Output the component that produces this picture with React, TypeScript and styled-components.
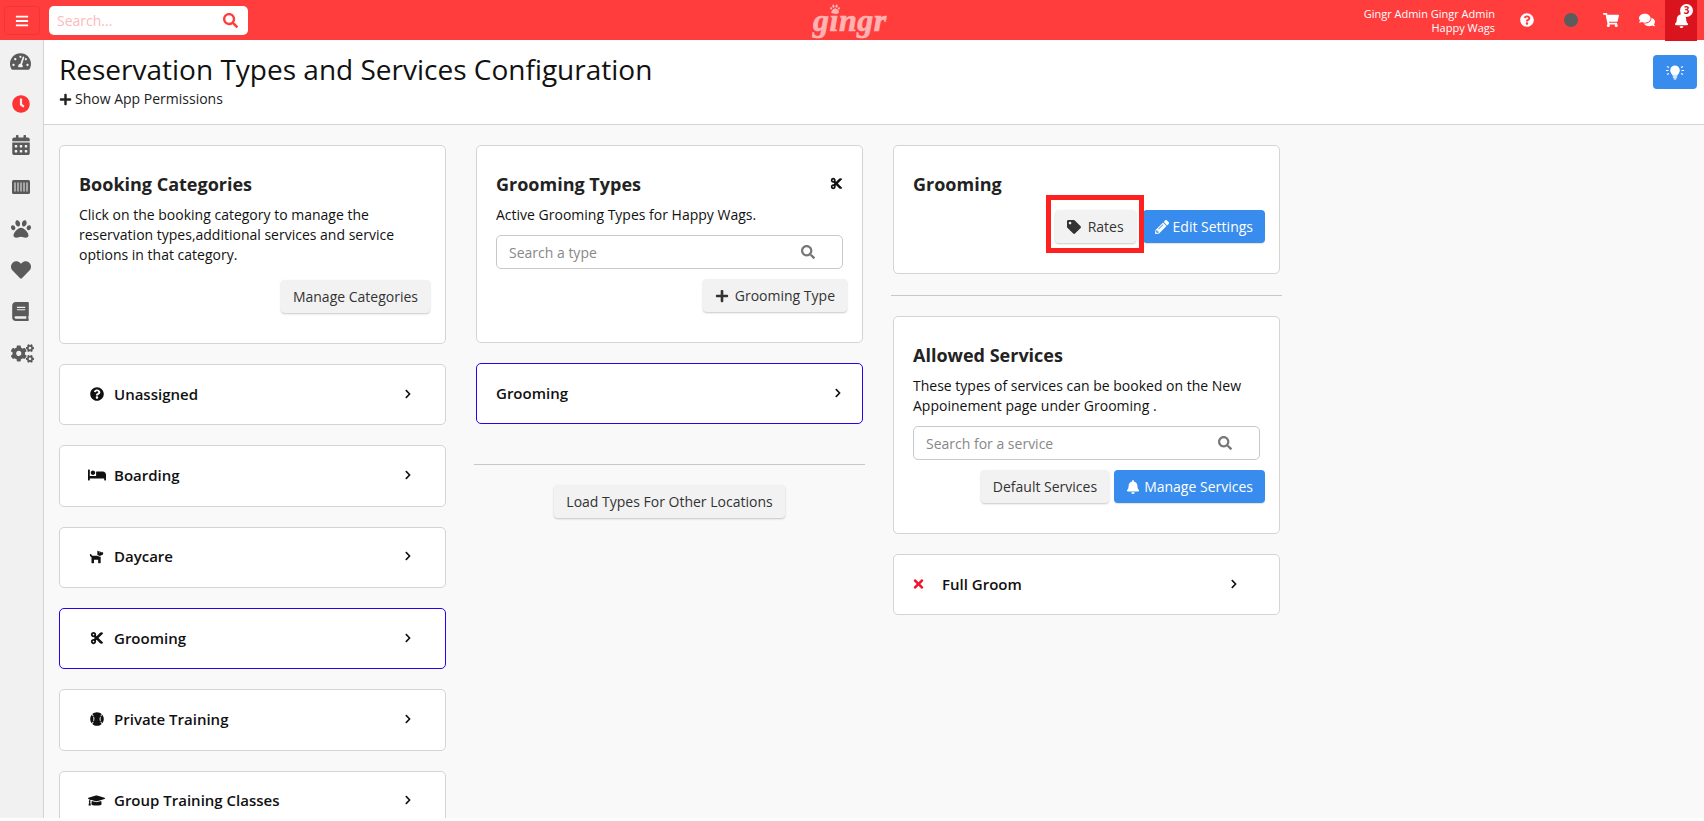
import React from "react";
import styled, { createGlobalStyle } from "styled-components";
import {
  FaBars,
  FaBaseballBall,
  FaBed,
  FaBell,
  FaBook,
  FaCalendarAlt,
  FaChevronRight,
  FaClock,
  FaCogs,
  FaComments,
  FaCut,
  FaDog,
  FaGraduationCap,
  FaHeart,
  FaPaw,
  FaPencilAlt,
  FaPlus,
  FaQuestionCircle,
  FaSearch,
  FaShoppingCart,
  FaTachometerAlt,
  FaTag,
  FaTimes,
} from "react-icons/fa";

const GlobalStyle = createGlobalStyle`
  html, body {
    margin: 0;
    height: 100%;
    overflow: hidden;
    background: #fff;
    font-family: "Open Sans", "Liberation Sans", sans-serif;
    color: #222;
  }
  * { box-sizing: border-box; }
`;

const Shell = styled.div`
  height: 818px;
  display: flex;
  flex-direction: column;
  overflow: hidden;
`;

const TopBar = styled.header`
  height: 40px;
  flex: none;
  background: #ff3d3d;
  display: flex;
  align-items: center;
  position: relative;
`;

const MenuButton = styled.div`
  width: 36px;
  height: 29px;
  margin: 1px 0 0 4px;
  border-radius: 4px;
  border: 1px solid #f23535;
  display: flex;
  align-items: center;
  justify-content: center;
  color: #fff;
  font-size: 14px;
`;

const TopSearch = styled.div`
  width: 199px;
  height: 29px;
  margin-left: 9px;
  background: #fff;
  border-radius: 5px;
  display: flex;
  align-items: center;
  justify-content: space-between;
  padding: 0 10px 0 8px;
  font-size: 14px;
  color: #ffb9b9;
  svg {
    color: #ff3d3d;
    font-size: 15px;
  }
`;

const Logo = styled.div`
  position: absolute;
  left: 813px;
  top: 4px;
  font-family: "Liberation Serif", serif;
  font-style: italic;
  font-weight: 700;
  font-size: 32px;
  line-height: 32px;
  letter-spacing: 0.5px;
  -webkit-text-stroke: 0.7px #ffb3b3;
  color: #ffb3b3;
  svg {
    position: absolute;
    left: 17px;
    top: 0;
    font-size: 10px;
    stroke-width: 0;
  }
`;

const UserInfo = styled.div`
  margin-left: auto;
  text-align: right;
  color: #fff;
  font-size: 11px;
  line-height: 13.5px;
  padding-top: 1px;
`;

const TopIcons = styled.div`
  display: flex;
  align-items: center;
  height: 40px;
  color: #fff;
  margin-right: 7px;
`;

const TopIcon = styled.span<{ $w: number; $size?: number }>`
  width: ${(p) => p.$w}px;
  display: flex;
  align-items: center;
  justify-content: center;
  font-size: ${(p) => p.$size ?? 14}px;
`;

const StatusDot = styled.span`
  width: 14px;
  height: 14px;
  border-radius: 50%;
  background: #5c5c5c;
`;

const BellBox = styled.div`
  width: 32px;
  height: 41px;
  align-self: flex-start;
  background: #d9141e;
  display: flex;
  align-items: center;
  justify-content: center;
  position: relative;
  font-size: 15px;
  margin-left: 10px;
  z-index: 1;
`;

const BellBadge = styled.span`
  position: absolute;
  top: 4px;
  right: 4px;
  width: 13px;
  height: 13px;
  border-radius: 50%;
  background: #fff;
  color: #d9141e;
  font-size: 10px;
  font-weight: 700;
  line-height: 13px;
  text-align: center;
`;

const Body = styled.div`
  flex: 1;
  display: flex;
  min-height: 0;
`;

const SideBar = styled.nav`
  width: 44px;
  flex: none;
  background: #f1f1f1;
  border-right: 1px solid #d4d4d4;
  display: flex;
  flex-direction: column;
  align-items: center;
  padding: 1px 2px 0 0;
`;

const SideItem = styled.div<{ $active?: boolean; $size?: number; $shift?: number }>`
  height: 41.7px;
  display: flex;
  align-items: center;
  justify-content: center;
  margin-left: ${(p) => p.$shift ?? 0}px;
  font-size: ${(p) => p.$size ?? 20}px;
  color: ${(p) => (p.$active ? "#ff3333" : "#5a5a5a")};
`;

const Main = styled.main`
  flex: 1;
  min-width: 0;
  display: flex;
  flex-direction: column;
  background: #f9f9f9;
`;

const PageHeader = styled.div`
  height: 85px;
  flex: none;
  background: #fff;
  border-bottom: 1px solid #d4d4d4;
  padding: 12px 15px 0;
  position: relative;
`;

const Title = styled.h1`
  margin: 0;
  font-size: 28px;
  font-weight: 400;
  line-height: 34px;
  color: #111;
`;

const PermLink = styled.div`
  display: flex;
  align-items: center;
  gap: 3px;
  font-size: 14px;
  line-height: 20px;
  color: #222;
  margin-top: 3px;
  svg {
    font-size: 13px;
    color: #222;
  }
`;

const HintButton = styled.div`
  position: absolute;
  right: 7px;
  top: 15px;
  width: 44px;
  height: 34px;
  border-radius: 4px;
  background: #378ced;
  color: #fff;
  display: flex;
  align-items: center;
  justify-content: center;
`;

const Columns = styled.div`
  flex: 1;
  min-height: 0;
  overflow: hidden;
  display: grid;
  grid-template-columns: repeat(3, 387px);
  column-gap: 30px;
  align-items: start;
  padding: 20px 0 0 15px;
`;

const Column = styled.div`
  display: flex;
  flex-direction: column;
  gap: 20px;
`;

const Card = styled.section<{ $h: number }>`
  height: ${(p) => p.$h}px;
  flex: none;
  background: #fff;
  border: 1px solid #d4d4d4;
  border-radius: 5px;
  padding: 26px 19px 0;
  position: relative;
`;

const CardTitle = styled.h3`
  margin: 0;
  font-size: 18px;
  font-weight: 700;
  line-height: 24px;
  color: #222;
`;

const CardText = styled.p`
  margin: 9px 0 0;
  font-size: 14px;
  line-height: 20px;
  color: #111;
`;

const CornerIcon = styled.span`
  position: absolute;
  top: 31px;
  right: 19px;
  font-size: 13px;
  color: #111;
  display: flex;
`;

const Actions = styled.div<{ $top: number; $over?: number }>`
  display: flex;
  justify-content: flex-end;
  gap: 5px;
  margin: ${(p) => p.$top}px ${(p) => -(p.$over ?? 0)}px 0 0;
`;

const Button = styled.div<{ $primary?: boolean; $gap?: number }>`
  height: 33px;
  padding: 0 12px;
  border-radius: 4px;
  display: inline-flex;
  align-items: center;
  justify-content: center;
  gap: ${(p) => p.$gap ?? 4}px;
  flex: none;
  font-size: 14px;
  white-space: nowrap;
  background: ${(p) => (p.$primary ? "#378ced" : "#f2f2f2")};
  color: ${(p) => (p.$primary ? "#fff" : "#333")};
  box-shadow: ${(p) =>
    p.$primary ? "0 1px 1px rgba(0,0,0,.12)" : "0 1px 2px rgba(0,0,0,.22)"};
  svg {
    font-size: 14px;
  }
`;

const RatesFrame = styled.div`
  position: relative;
  flex: none;
  z-index: 1;
  margin-right: 2px;
  &::after {
    content: "";
    position: absolute;
    left: -9px;
    right: -8px;
    top: -15px;
    bottom: -10px;
    border: 5px solid #ff2020;
    pointer-events: none;
  }
`;

const SearchBox = styled.div`
  height: 34px;
  margin-top: 10px;
  border: 1px solid #c8c8c8;
  border-radius: 5px;
  background: #fff;
  display: flex;
  align-items: center;
  justify-content: space-between;
  padding: 0 27px 0 12px;
  font-size: 14px;
  color: #888;
  svg {
    font-size: 14px;
    color: #777;
  }
`;

const Row = styled.div<{ $selected?: boolean; $pad?: number; $arrow?: number }>`
  height: 61.33px;
  flex: none;
  background: #fff;
  border: 1px solid ${(p) => (p.$selected ? "#2b00ef" : "#d4d4d4")};
  border-radius: 5px;
  display: flex;
  align-items: center;
  padding: 0 ${(p) => p.$arrow ?? 32}px 2px ${(p) => p.$pad ?? 23}px;
  font-size: 15px;
  font-weight: 600;
  color: #111;
`;

const RowIcon = styled.span<{ $w?: number; $red?: boolean; $gap?: number }>`
  width: ${(p) => p.$w ?? 27}px;
  margin-right: ${(p) => p.$gap ?? 4}px;
  display: flex;
  justify-content: center;
  font-size: 14px;
  color: ${(p) => (p.$red ? "#f0142f" : "#111")};
`;

const RowLabel = styled.span`
  flex: 1;
`;

const Arrow = styled(FaChevronRight)`
  font-size: 10px;
  color: #111;
`;

const Divider = styled.hr<{ $top: number }>`
  width: 391px;
  height: 1px;
  border: 0;
  background: #c8c8c8;
  margin: ${(p) => p.$top}px -2px 0;
  align-self: flex-start;
`;

const Centered = styled.div`
  display: flex;
  justify-content: center;
`;

const BarcodeIcon = () => (
  <svg width="18" height="14" viewBox="0 0 18 14">
    <rect width="18" height="14" rx="1.5" fill="currentColor" />
    <path d="M3 2.5v9M6 2.5v9M9 2.5v9M12 2.5v9M15 2.5v9" stroke="#f1f1f1" strokeWidth="1" />
  </svg>
);

const BulbIcon = () => (
  <svg width="18" height="15" viewBox="0 0 18 15" fill="#fff">
    <path d="M9 .5a4.900 4.900 0 0 0-3.600 8.200c.7.800 1.100 1.300 1.200 2h4.800c.1-.7.500-1.200 1.200-2A4.900 4.900 0 0 0 9 .5z" />
    <rect x="6.800" y="11.300" width="4.400" height="1.500" rx=".6" />
    <rect x="7.600" y="13.200" width="2.800" height="1.300" rx=".6" />
    <path
      d="M0 5.500h2.500M15.500 5.500H18M1 1.500l2 1M17 1.500l-2 1M1 9.500l2-1M17 9.500l-2-1"
      stroke="#fff"
      strokeWidth="1.200"
      fill="none"
    />
  </svg>
);

const categories = [
  { label: "Unassigned", icon: <FaQuestionCircle /> },
  { label: "Boarding", icon: <FaBed style={{ fontSize: 18 }} /> },
  { label: "Daycare", icon: <FaDog style={{ fontSize: 15 }} /> },
  { label: "Grooming", icon: <FaCut />, selected: true },
  { label: "Private Training", icon: <FaBaseballBall /> },
  { label: "Group Training Classes", icon: <FaGraduationCap style={{ fontSize: 17 }} /> },
];

export default function App() {
  return (
    <Shell>
      <GlobalStyle />
      <TopBar>
        <MenuButton>
          <FaBars />
        </MenuButton>
        <TopSearch>
          Search...
          <FaSearch />
        </TopSearch>
        <Logo>
          <FaPaw />
          gingr
        </Logo>
        <UserInfo>
          Gingr Admin Gingr Admin
          <br />
          Happy Wags
        </UserInfo>
        <TopIcons>
          <TopIcon $w={64}>
            <FaQuestionCircle />
          </TopIcon>
          <TopIcon $w={24}>
            <StatusDot />
          </TopIcon>
          <TopIcon $w={56} $size={16}>
            <FaShoppingCart />
          </TopIcon>
          <TopIcon $w={16} $size={16}>
            <FaComments />
          </TopIcon>
          <BellBox>
            <FaBell />
            <BellBadge>3</BellBadge>
          </BellBox>
        </TopIcons>
      </TopBar>
      <Body>
        <SideBar>
          <SideItem $size={21}><FaTachometerAlt /></SideItem>
          <SideItem $active $size={18}><FaClock /></SideItem>
          <SideItem><FaCalendarAlt /></SideItem>
          <SideItem><BarcodeIcon /></SideItem>
          <SideItem><FaPaw /></SideItem>
          <SideItem><FaHeart /></SideItem>
          <SideItem $size={19}><FaBook /></SideItem>
          <SideItem $size={23} $shift={4}><FaCogs /></SideItem>
        </SideBar>
        <Main>
          <PageHeader>
            <Title>Reservation Types and Services Configuration</Title>
            <PermLink>
              <FaPlus />
              Show App Permissions
            </PermLink>
            <HintButton>
              <BulbIcon />
            </HintButton>
          </PageHeader>
          <Columns>
            <Column>
              <Card $h={199}>
                <CardTitle>Booking Categories</CardTitle>
                <CardText>
                  Click on the booking category to manage the reservation types,additional services and service options in that category.
                </CardText>
                <Actions $top={15} $over={4}>
                  <Button>Manage Categories</Button>
                </Actions>
              </Card>
              {categories.map((c) => (
                <Row key={c.label} $selected={c.selected}>
                  <RowIcon>{c.icon}</RowIcon>
                  <RowLabel>{c.label}</RowLabel>
                  <Arrow />
                </Row>
              ))}
            </Column>
            <Column>
              <Card $h={198}>
                <CardTitle>Grooming Types</CardTitle>
                <CornerIcon>
                  <FaCut />
                </CornerIcon>
                <CardText>Active Grooming Types for Happy Wags.</CardText>
                <SearchBox>
                  Search a type
                  <FaSearch />
                </SearchBox>
                <Actions $top={10} $over={4}>
                  <Button $gap={6}>
                    <FaPlus />
                    Grooming Type
                  </Button>
                </Actions>
              </Card>
              <Row $selected $pad={19} $arrow={19}>
                <RowLabel>Grooming</RowLabel>
                <Arrow />
              </Row>
              <Divider $top={20} />
              <Centered>
                <Button>Load Types For Other Locations</Button>
              </Centered>
            </Column>
            <Column>
              <Card $h={129}>
                <CardTitle>Grooming</CardTitle>
                <Actions $top={14} $over={5}>
                  <RatesFrame>
                    <Button $gap={7}>
                      <FaTag />
                      Rates
                    </Button>
                  </RatesFrame>
                  <Button $primary>
                    <FaPencilAlt />
                    Edit Settings
                  </Button>
                </Actions>
              </Card>
              <Divider $top={1} />
              <Card $h={218}>
                <CardTitle>Allowed Services</CardTitle>
                <CardText>
                  These types of services can be booked on the New Appoinement page under Grooming .
                </CardText>
                <SearchBox>
                  Search for a service
                  <FaSearch />
                </SearchBox>
                <Actions $top={10} $over={5}>
                  <Button>Default Services</Button>
                  <Button $primary>
                    <FaBell />
                    Manage Services
                  </Button>
                </Actions>
              </Card>
              <Row $pad={19} $arrow={40}>
                <RowIcon $w={11} $red $gap={18}>
                  <FaTimes />
                </RowIcon>
                <RowLabel>Full Groom</RowLabel>
                <Arrow />
              </Row>
            </Column>
          </Columns>
        </Main>
      </Body>
    </Shell>
  );
}
